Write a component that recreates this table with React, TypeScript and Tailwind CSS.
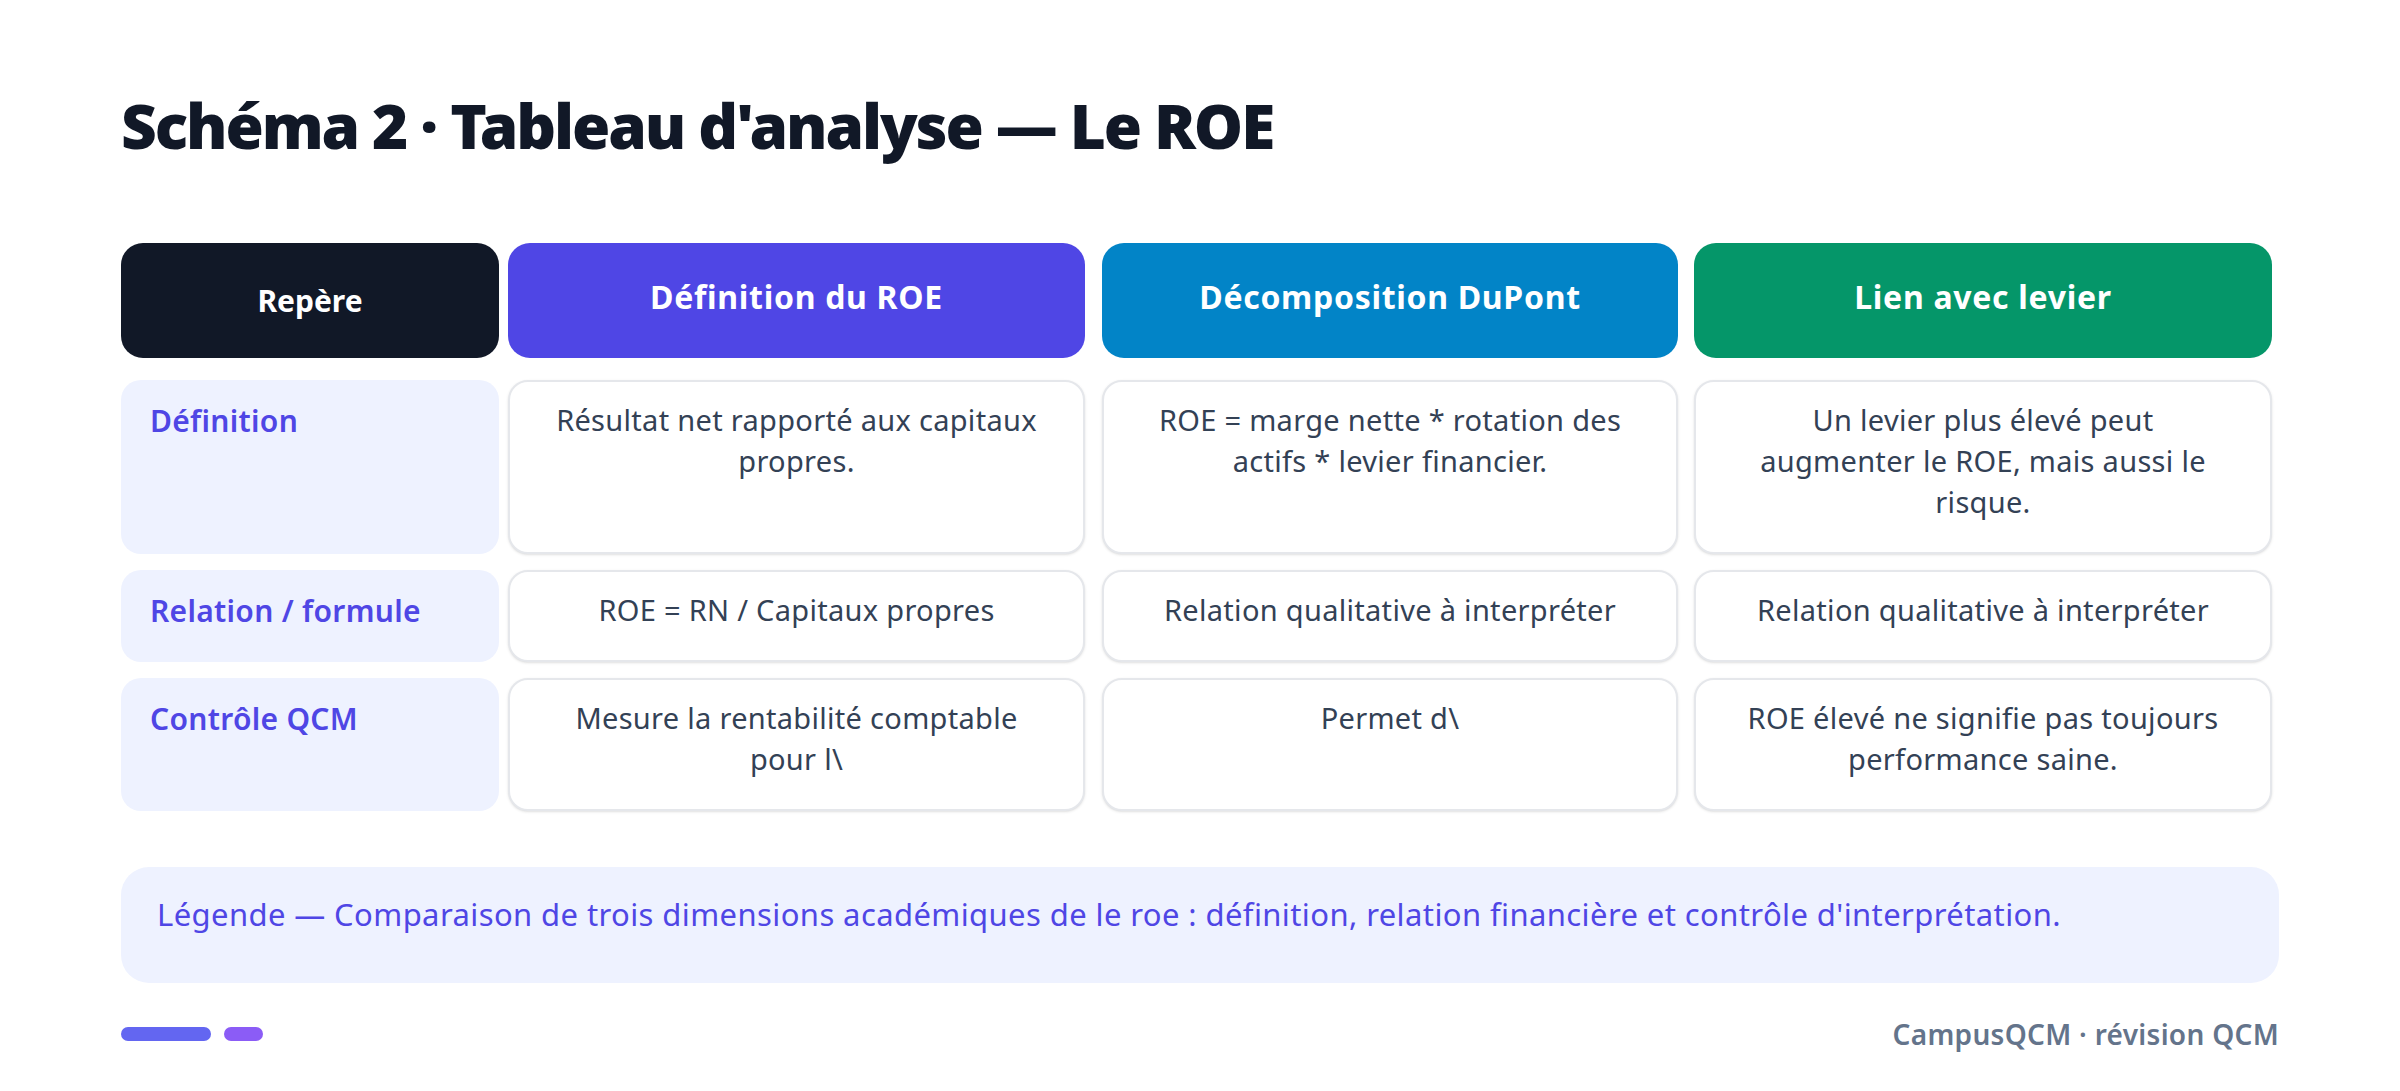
const font = { fontFamily: '"Noto Sans", "Open Sans", sans-serif' };

type Row = { label: string; cells: string[] };

const headers = [
  { title: 'Définition du ROE', bg: 'bg-[#4f46e5]' },
  { title: 'Décomposition DuPont', bg: 'bg-[#0284c7]' },
  { title: 'Lien avec levier', bg: 'bg-[#059669]' },
];

const rows: Row[] = [
  {
    label: 'Définition',
    cells: [
      'Résultat net rapporté aux capitaux propres.',
      'ROE = marge nette * rotation des actifs * levier financier.',
      'Un levier plus élevé peut augmenter le ROE, mais aussi le risque.',
    ],
  },
  {
    label: 'Relation / formule',
    cells: [
      'ROE = RN / Capitaux propres',
      'Relation qualitative à interpréter',
      'Relation qualitative à interpréter',
    ],
  },
  {
    label: 'Contrôle QCM',
    cells: [
      'Mesure la rentabilité comptable pour l\\',
      'Permet d\\',
      'ROE élevé ne signifie pas toujours performance saine.',
    ],
  },
];

// column widths and left offsets, measured from the slide
const colW = ['w-[577px]', 'w-[576px]', 'w-[578px]'];
const colMl = ['ml-[9px]', 'ml-[17px]', 'ml-[16px]'];

export default function App() {
  return (
    <div className="min-h-screen bg-white px-[121px] pt-[88px]" style={font}>
      <h1 className="text-[62px] font-black leading-[1.2] tracking-[-2.1px] text-[#111827]">
        Schéma 2 · Tableau d'analyse — Le ROE
      </h1>

      <div className="mt-[81px] flex">
        <div className="flex h-[115px] w-[378px] items-center justify-center rounded-[22px] bg-[#111827] text-[30px] font-bold text-white">
          Repère
        </div>
        {headers.map((h, i) => (
          <div
            key={h.title}
            className={`${colW[i]} ${colMl[i]} ${h.bg} flex h-[115px] items-center justify-center rounded-[22px] pb-[7px] text-[32px] font-bold tracking-[0.7px] text-white`}
          >
            {h.title}
          </div>
        ))}
      </div>

      <div className="mt-[22px] flex flex-col gap-[16px]">
        {rows.map((r) => (
          <div key={r.label} className="flex items-stretch">
            <div className="w-[378px] rounded-[20px] bg-[#eef2ff] px-[29px] pb-[30px] pt-[20px] text-[30px] font-semibold leading-[41px] tracking-[0.3px] text-[#4f46e5]">
              {r.label}
            </div>
            {r.cells.map((c, i) => (
              <div
                key={i}
                className={`${colW[i]} ${colMl[i]} rounded-[20px] border-2 border-[#e5e7eb] bg-white px-[42px] pb-[30px] pt-[17px] text-center text-[29px] leading-[41px] tracking-[0.3px] text-[#334155] shadow-sm`}
              >
                {c}
              </div>
            ))}
          </div>
        ))}
      </div>

      <div className="mt-[56px] w-[2158px] rounded-[28px] bg-[#eef2ff] px-[36px] pb-[46px] pt-[25px] text-[31px] leading-[45px] tracking-[0.4px] text-[#4f46e5]">
        Légende — Comparaison de trois dimensions académiques de le roe : définition, relation financière et contrôle d'interprétation.
      </div>

      <div className="mt-[30px] flex w-[2158px] items-center justify-between">
        <div className="flex items-center gap-[13px]">
          <div className="h-[14px] w-[90px] rounded-full bg-[#6366f1]" />
          <div className="h-[14px] w-[39px] rounded-full bg-[#8b5cf6]" />
        </div>
        <div className="text-[28px] font-semibold tracking-[0.3px] text-[#64748b]">CampusQCM · révision QCM</div>
      </div>
    </div>
  );
}
